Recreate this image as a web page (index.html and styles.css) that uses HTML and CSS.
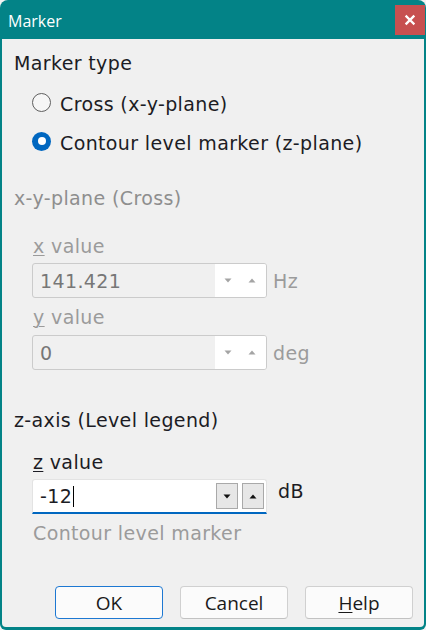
FILE: index.html
```html
<!DOCTYPE html>
<html>
<head>
<meta charset="utf-8">
<link rel="stylesheet" href="styles.css">
</head>
<body>
<div class="window">
  <div class="titlebar">
    <span class="title">Marker</span>
    <div class="close">
      <svg width="12" height="12" viewBox="0 0 12 12"><path d="M2.5 2.5 L9.5 9.5 M9.5 2.5 L2.5 9.5" stroke="#fff" stroke-width="2.4" stroke-linecap="square"/></svg>
    </div>
  </div>
  <div class="content">
    <div class="heading h-type">Marker type</div>
    <div class="radio r1"><span class="dot"></span><span class="rtext">Cross (x-y-plane)</span></div>
    <div class="radio r2"><span class="dot checked"><span class="inner"></span></span><span class="rtext">Contour level marker (z-plane)</span></div>

    <div class="heading dim h-xy">x-y-plane (Cross)</div>
    <div class="label dim l-x"><u>x</u> value</div>
    <div class="field-row f1">
      <div class="spin off">
        <span class="val">141.421</span>
        <div class="arrows">
          <svg width="8" height="5" viewBox="0 0 8 5"><path d="M0.5 0.5 H7.5 L4 4.5 Z" fill="#a4a4a4"/></svg>
          <svg width="8" height="5" viewBox="0 0 8 5"><path d="M0.5 4.5 H7.5 L4 0.5 Z" fill="#a4a4a4"/></svg>
        </div>
      </div>
      <span class="unit dim">Hz</span>
    </div>
    <div class="label dim l-y"><u>y</u> value</div>
    <div class="field-row f2">
      <div class="spin off">
        <span class="val">0</span>
        <div class="arrows">
          <svg width="8" height="5" viewBox="0 0 8 5"><path d="M0.5 0.5 H7.5 L4 4.5 Z" fill="#a4a4a4"/></svg>
          <svg width="8" height="5" viewBox="0 0 8 5"><path d="M0.5 4.5 H7.5 L4 0.5 Z" fill="#a4a4a4"/></svg>
        </div>
      </div>
      <span class="unit dim">deg</span>
    </div>

    <div class="heading h-z">z-axis (Level legend)</div>
    <div class="label l-z"><u>z</u> value</div>
    <div class="field-row f3">
      <div class="spin on">
        <span class="val dark">-12<span class="caret"></span></span>
        <div class="btns">
          <span class="sbtn"><svg width="8" height="5" viewBox="0 0 8 5"><path d="M0.5 0.5 H7.5 L4 4.5 Z" fill="#111"/></svg></span>
          <span class="sbtn"><svg width="8" height="5" viewBox="0 0 8 5"><path d="M0.5 4.5 H7.5 L4 0.5 Z" fill="#111"/></svg></span>
        </div>
      </div>
      <span class="unit unit-db">dB</span>
    </div>
    <div class="label dim note">Contour level marker</div>

    <div class="buttons">
      <button class="btn default">OK</button>
      <button class="btn">Cancel</button>
      <button class="btn"><u>H</u>elp</button>
    </div>
  </div>
</div>
</body>
</html>
```

FILE: styles.css
```css
html, body {
  margin: 0;
  padding: 0;
  background: #f3f3f3;
}
.window {
  width: 426px;
  height: 630px;
  background: #038387;
  border-radius: 8px 8px 6px 6px;
  overflow: hidden;
  display: flex;
  flex-direction: column;
}
.titlebar {
  height: 39px;
  display: flex;
  align-items: flex-start;
  justify-content: space-between;
  flex: none;
}
.title {
  font-family: "Open Sans", "Noto Sans", sans-serif;
  font-size: 16px;
  line-height: 22px;
  color: #ffffff;
  padding-top: 10px;
  padding-left: 8px;
}
.close {
  width: 30px;
  height: 30px;
  margin-top: 5px;
  margin-right: 1px;
  background: #c75050;
  display: flex;
  align-items: center;
  justify-content: center;
}
.content {
  margin: 0 2px;
  height: 588px;
  background: #f0f0f0;
  border-radius: 0 0 4px 4px;
  font-family: "DejaVu Sans", Verdana, sans-serif;
  font-size: 19px;
  line-height: 24px;
  letter-spacing: 0.37px;
  color: #1c1c24;
  display: flex;
  flex-direction: column;
}
.heading { padding-left: 12px; height: 24px; }
.dim { color: #9b9b9b; }
.h-xy { color: #8e8e8e; }
.label { padding-left: 31px; height: 24px; }
.label u { text-decoration-thickness: 1px; text-underline-offset: 2px; }

.h-type { margin-top: 12px; }
.r1 { margin-top: 17px; }
.r2 { margin-top: 15px; }
.h-xy { margin-top: 31px; }
.l-x { margin-top: 24px; }
.f1 { margin-top: 5px; }
.l-y { margin-top: 7px; }
.f2 { margin-top: 6px; }
.h-z { margin-top: 38px; }
.l-z { margin-top: 18px; }
.f3 { margin-top: 5px; }
.note { margin-top: 7px; }
.buttons { margin-top: 41px; }

.radio {
  display: flex;
  align-items: center;
  height: 24px;
  padding-left: 30px;
}
.dot {
  width: 19px;
  height: 19px;
  box-sizing: border-box;
  border-radius: 50%;
  border: 1px solid #5f5f5f;
  background: #f6f6f6;
  margin-right: 9px;
  margin-bottom: 4px;
  display: flex;
  align-items: center;
  justify-content: center;
  flex: none;
}
.dot.checked {
  border: none;
  background: #0067c0;
}
.dot .inner {
  width: 8px;
  height: 8px;
  border-radius: 50%;
  background: #ffffff;
}

.field-row {
  display: flex;
  align-items: center;
  padding-left: 30px;
  height: 35px;
}
.spin {
  width: 235px;
  height: 35px;
  box-sizing: border-box;
  display: flex;
  align-items: center;
  border-radius: 3px;
}
.spin.off {
  border: 1px solid #cbcbcb;
  background: #f0f0f0;
}
.spin.on {
  border: 1px solid #e3e3e3;
  border-bottom: 2px solid #0067c0;
  background: #ffffff;
  border-radius: 3px 3px 0 0;
}
.val {
  flex: 1;
  padding-left: 7px;
  color: #777777;
  display: flex;
  align-items: center;
}
.val.dark { color: #1c1c24; }
.caret {
  display: inline-block;
  width: 1px;
  height: 21px;
  background: #000;
  margin-left: 1px;
}
.arrows {
  width: 51px;
  align-self: stretch;
  background: #ffffff;
  display: flex;
  align-items: center;
  justify-content: space-between;
  padding: 0 10px 0 9px;
  box-sizing: border-box;
  border-radius: 0 2px 2px 0;
}
.btns {
  display: flex;
  gap: 4px;
  margin-right: 2px;
}
.sbtn {
  width: 22px;
  height: 26px;
  box-sizing: border-box;
  border: 1px solid #a9a9a9;
  background: #e7e7e7;
  display: flex;
  align-items: center;
  justify-content: center;
}
.unit {
  margin-left: 6px;
  line-height: 24px;
}
.unit-db {
  align-self: flex-start;
  margin-left: 11px;
}

.buttons {
  display: flex;
  gap: 17px;
  padding-left: 53px;
}
.btn {
  width: 108px;
  height: 33px;
  box-sizing: border-box;
  border: 1px solid #d0d0d0;
  border-bottom-color: #c2c2c2;
  border-radius: 4px;
  background: #fbfbfb;
  font-family: "Open Sans", "Noto Sans", sans-serif;
  font-size: 19px;
  line-height: 24px;
  color: #1a1a1a;
  padding: 0;
  margin: 0;
}
.btn.default {
  border: 1px solid #1d78d2;
}
.btn u { text-underline-offset: 2px; }
```
